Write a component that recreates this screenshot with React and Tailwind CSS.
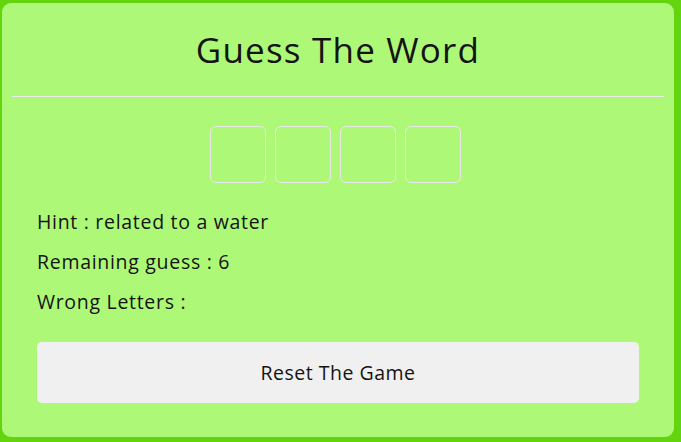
import React, { useState } from "react";

const App = () => {
  const [letters] = useState(["", "", "", ""]);
  const [remaining] = useState(6);
  const [wrong] = useState([]);

  return (
    <div
      className="w-[681px] h-[442px] bg-[#64d40f] pt-[3px] pl-[2px]"
      style={{ fontFamily: '"Open Sans", "Liberation Sans", sans-serif' }}
    >
      <div className="w-[672px] h-[434px] bg-[#adf977] rounded-[9px] flex flex-col text-[#141414]">
        <h1 className="text-[35px] tracking-[1.2px] text-center pt-[22px] h-[93px] leading-[50px]">
          Guess The Word
        </h1>
        <div className="mx-[10px] h-px bg-[#ececec]"></div>

        <div className="flex justify-center gap-[9px] mt-[29px] pr-[5px]">
          {letters.map((l, i) => (
            <div
              key={i}
              className="w-[56px] h-[57px] border border-[#e8e8e8] rounded-[6px] flex items-center justify-center text-2xl"
            >
              {l}
            </div>
          ))}
        </div>

        <div className="pl-[35px] mt-[19px] text-[19.5px] tracking-[0.7px] leading-[40px]">
          <p>Hint : related to a water</p>
          <p>Remaining guess : {remaining}</p>
          <p>Wrong Letters : {wrong.join(", ")}</p>
        </div>

        <button className="mx-[35px] mt-[20px] h-[61px] bg-[#f0f0f0] rounded-[5px] text-[19.5px] tracking-[0.5px] text-[#141414]">
          Reset The Game
        </button>
      </div>
    </div>
  );
};

export default App;
